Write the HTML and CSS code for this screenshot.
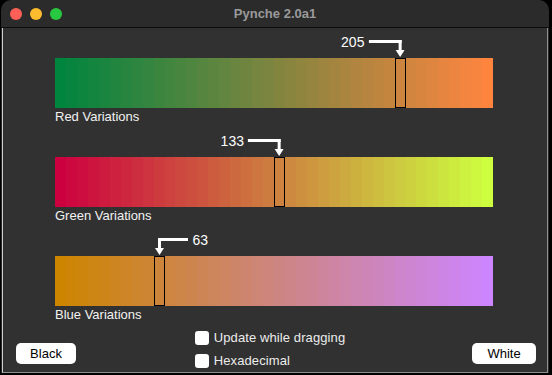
FILE: index.html
```html
<!DOCTYPE html>
<html lang="en">
<head>
  <meta charset="UTF-8">
  <title>Pynche 2.0a1</title>
  <link rel="stylesheet" href="styles.css">
</head>
<body>
  <div class="window">
    <div class="titlebar">
      <div class="lights">
        <span class="light red"></span>
        <span class="light yellow"></span>
        <span class="light green"></span>
      </div>
      <div class="title">Pynche 2.0a1</div>
      <div></div>
    </div>

    <div class="content">
      <div class="strip" data-channel="0">
        <div class="marker marker-left">
          <span class="value">205</span>
          <svg width="36" height="17" viewBox="0 0 36 17">
            <rect x="0" y="0" width="33" height="3"/>
            <rect x="30" y="0" width="3" height="11"/>
            <polygon points="27,10 36,10 31.5,17"/>
          </svg>
        </div>
        <div class="chips"></div>
        <div class="label">Red Variations</div>
      </div>

      <div class="strip" data-channel="1">
        <div class="marker marker-left">
          <span class="value">133</span>
          <svg width="36" height="17" viewBox="0 0 36 17">
            <rect x="0" y="0" width="33" height="3"/>
            <rect x="30" y="0" width="3" height="11"/>
            <polygon points="27,10 36,10 31.5,17"/>
          </svg>
        </div>
        <div class="chips"></div>
        <div class="label">Green Variations</div>
      </div>

      <div class="strip" data-channel="2">
        <div class="marker marker-right">
          <svg width="33" height="17" viewBox="0 0 33 17">
            <rect x="3" y="0" width="30" height="3"/>
            <rect x="3" y="0" width="3" height="11"/>
            <polygon points="0,10 9,10 4.5,17"/>
          </svg>
          <span class="value">63</span>
        </div>
        <div class="chips"></div>
        <div class="label">Blue Variations</div>
      </div>

      <div class="controls">
        <button class="btn">Black</button>
        <div class="options">
          <label class="check"><span class="box"></span>Update while dragging</label>
          <label class="check"><span class="box"></span>Hexadecimal</label>
        </div>
        <button class="btn">White</button>
      </div>
    </div>
  </div>

  <script>
    // couleur courante (peru) et les 3 bandes de variations
    const color = [205, 133, 63];
    const numChips = 40;
    const stripWidth = 438;
    const chipWidth = stripWidth / numChips;

    document.querySelectorAll(".strip").forEach(function (strip) {
      const ch = parseInt(strip.dataset.channel, 10);
      const chips = strip.querySelector(".chips");
      const selected = Math.floor(color[ch] * (numChips - 1) / 255);

      for (let i = 0; i < numChips; i++) {
        const c = color.slice();
        c[ch] = Math.round(i * 255 / (numChips - 1));
        const chip = document.createElement("div");
        chip.classList.add("chip");
        if (i === selected) chip.classList.add("selected");
        chip.style.background = `rgb(${c[0]}, ${c[1]}, ${c[2]})`;
        chips.appendChild(chip);
      }

      const cx = (selected + 0.5) * chipWidth;
      const marker = strip.querySelector(".marker");
      if (marker.classList.contains("marker-left")) {
        marker.style.left = (cx + 4.5) + "px";
      } else {
        marker.style.left = (cx - 4.5) + "px";
      }
    });
  </script>
</body>
</html>
```

FILE: styles.css
```css
body {
  margin: 0;
  padding: 0;
  background: #000;
  font-family: "Liberation Sans", Arial, sans-serif;
}

.window {
  width: 548px;
  height: 373px;
  margin-left: 1px;
  background: #2b2b2b;
  border-radius: 10px 10px 0 0;
  overflow: hidden;
  display: flex;
  flex-direction: column;
}

.titlebar {
  height: 27px;
  border-bottom: 1px solid #0c0c0c;
  display: grid;
  grid-template-columns: 1fr auto 1fr;
  align-items: center;
}

.lights {
  display: flex;
  gap: 8px;
  padding-left: 9px;
  padding-top: 1px;
}

.light {
  width: 12px;
  height: 12px;
  border-radius: 50%;
}

.light.red { background: #fe5f57; }
.light.yellow { background: #febc2e; }
.light.green { background: #28c840; }

.title {
  color: #9a9a9a;
  font-size: 13px;
  font-weight: bold;
}

.content {
  flex: 1;
  background: #313131;
  margin: 0 1px 0 1px;
  border-left: 1px solid #cfcfcf;
  border-right: 1px solid #8f8f8f;
  border-bottom: 1px solid #8f8f8f;
  overflow: hidden;
}

.strip {
  position: relative;
  width: 438px;
  margin-left: 52px;
  padding-top: 30px;
}

.marker {
  position: absolute;
  top: 6px;
  display: flex;
  align-items: flex-start;
  gap: 4px;
  color: #fff;
}

.marker-left {
  transform: translateX(-100%);
}

.marker-right {
  gap: 5px;
}

.marker svg {
  margin-top: 6px;
  fill: #fff;
}

.value {
  font-size: 14px;
  line-height: 16px;
}

.chips {
  display: flex;
  height: 50px;
}

.chip {
  flex: 1;
  height: 100%;
}

.chip.selected {
  box-shadow: inset 0 0 0 1px #000;
}

.label {
  height: 19px;
  line-height: 17px;
  font-size: 13px;
  color: #f2f2f2;
}

.controls {
  display: flex;
  justify-content: space-between;
  align-items: flex-start;
  padding: 1px 11px 0 13px;
}

.btn {
  margin-top: 17px;
  width: 60px;
  height: 21px;
  padding: 0;
  border: none;
  border-radius: 5px;
  background: #fff;
  color: #000;
  font-family: "Liberation Sans", Arial, sans-serif;
  font-size: 13px;
}

.btn + .options + .btn {
  width: 64px;
}

.options {
  display: flex;
  flex-direction: column;
  margin-right: 8px;
}

.check {
  display: flex;
  align-items: center;
  gap: 5px;
  height: 23px;
  font-size: 13px;
  letter-spacing: 0.1px;
  color: #ececec;
}

.box {
  width: 14px;
  height: 14px;
  border-radius: 3px;
  background: #fff;
}
```
